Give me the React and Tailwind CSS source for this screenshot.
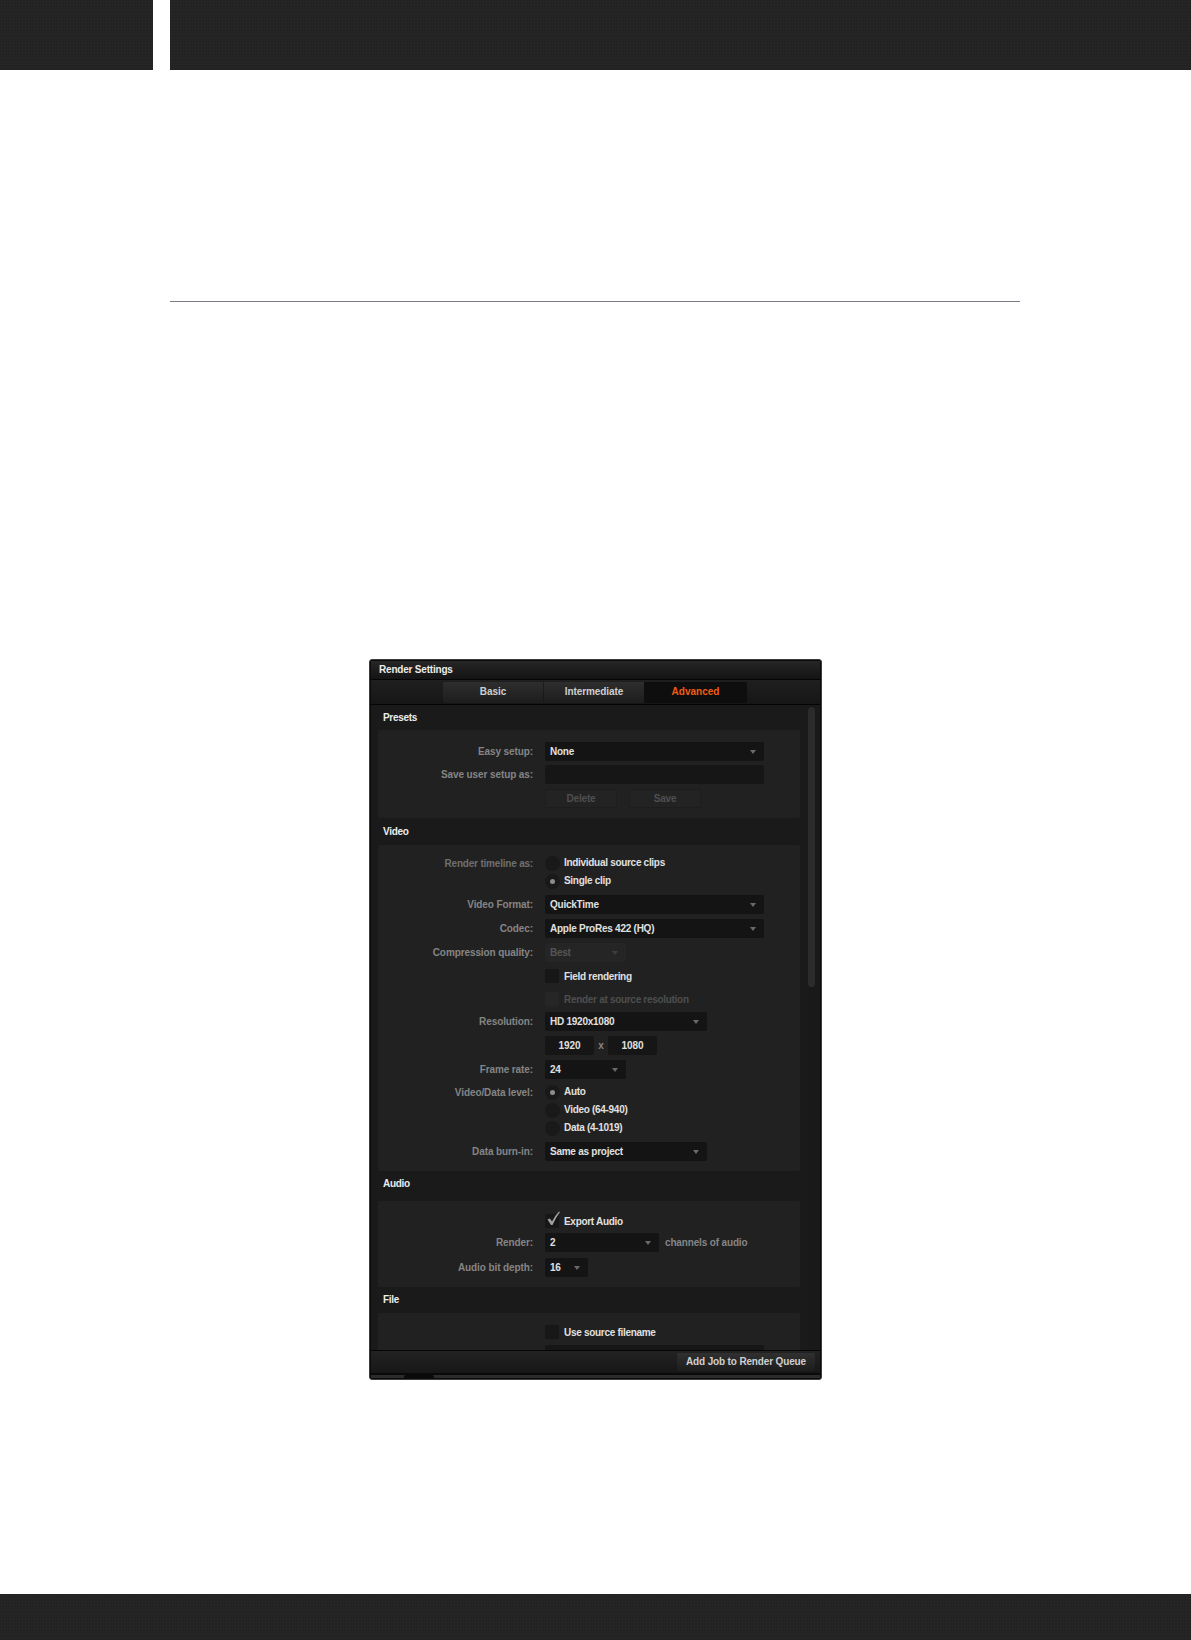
import React from "react";

const texture = "bg-[#232323] bg-[radial-gradient(rgba(255,255,255,0.03)_1px,transparent_1px)] bg-[size:3px_3px]";

function Caret({ dim }) {
  return (
    <svg width="6" height="4" viewBox="0 0 6 4" className="shrink-0">
      <path d="M0 0h6L3 4z" fill={dim ? "#3f3f3f" : "#6a6a6a"} />
    </svg>
  );
}

function Row({ label, dim, className = "", children }) {
  return (
    <div className={`flex items-center ${className}`}>
      <div className={`w-[155px] text-right tracking-[-0.1px] ${dim ? "text-[#6f6f6f]" : "text-[#858585]"}`}>{label}</div>
      <div className="ml-[12px] flex items-center">{children}</div>
    </div>
  );
}

function Select({ value, width, disabled }) {
  return (
    <div className={`flex h-[19px] items-center justify-between rounded-[2px] pl-[5px] pr-[8px] tracking-[-0.25px] ${width} ${disabled ? "bg-[#252525] text-[#555555]" : "bg-[#141414] text-[#e0e0e0]"}`}>
      <span>{value}</span>
      <Caret dim={disabled} />
    </div>
  );
}

function Radio({ label, on, className = "" }) {
  return (
    <div className={`flex h-[18px] items-center ${className}`}>
      <div className="flex h-[15px] w-[15px] items-center justify-center rounded-full bg-[#191919]">
        {on && <div className="h-[5px] w-[5px] rounded-full bg-[#8c8c8c]" />}
      </div>
      <span className="ml-[4px] tracking-[-0.3px] text-[#e0e0e0]">{label}</span>
    </div>
  );
}

function Check({ label, checked, disabled }) {
  return (
    <div className="flex h-[14px] items-center">
      <div className={`relative h-[14px] w-[14px] rounded-[2px] ${disabled ? "bg-[#262626]" : "bg-[#171717]"}`}>
        {checked && (
          <svg width="14" height="15" viewBox="0 0 14 15" className="absolute -top-[3px] left-[2px]">
            <path d="M0.5 8.5L3 7.5L5 10.5Q7.5 5 12 0.5L13 1Q8.5 7 5.5 14H4z" fill="#a0a0a0" />
          </svg>
        )}
      </div>
      <span className={`relative top-px ml-[5px] tracking-[-0.3px] ${disabled ? "text-[#4e4e4e]" : "text-[#e0e0e0]"}`}>{label}</span>
    </div>
  );
}

function DimButton({ label }) {
  return (
    <div className="flex h-[19px] w-[72px] items-center justify-center rounded-[2px] border border-[#1d1d1d] bg-[#232323] tracking-[-0.2px] text-[#4f4f4f]">
      {label}
    </div>
  );
}

function Section({ title, headClass, cardClass, children }) {
  return (
    <>
      <div className={`pl-[5px] font-bold tracking-[-0.3px] text-[#ececec] ${headClass}`}>{title}</div>
      <div className={`rounded-[2px] bg-[#212121] ${cardClass}`}>{children}</div>
    </>
  );
}

function RenderSettings() {
  return (
    <div className="ml-[369px] mt-[357px] flex h-[721px] w-[453px] flex-col rounded-[3px] border border-[#3d3d3d] bg-[#0a0a0a] px-px pb-px pt-px font-['Liberation_Sans',sans-serif] text-[10px] font-bold leading-none">
      <div className="flex h-[18px] shrink-0 items-center bg-gradient-to-b from-[#262626] to-[#141414] pl-[8px] tracking-[-0.2px] text-[#ececec]">
        Render Settings
      </div>
      <div className="flex h-[26px] shrink-0 items-center border-y border-[#050505] bg-gradient-to-b from-[#1f1f1f] to-[#161616] pl-[72px]">
        <div className="flex h-[21px] w-[304px] overflow-hidden rounded-[2px] text-[#cfcfcf]">
          <div className="flex w-[100px] items-center justify-center bg-gradient-to-b from-[#2e2e2e] to-[#1d1d1d]">Basic</div>
          <div className="ml-px flex w-[100px] items-center justify-center bg-gradient-to-b from-[#2e2e2e] to-[#1d1d1d] tracking-[-0.1px]">Intermediate</div>
          <div className="flex flex-1 items-center justify-center bg-[#0e0e0e] text-[#f25c14]">Advanced</div>
        </div>
      </div>

      <div className="flex min-h-0 flex-1 overflow-hidden bg-[#1a1a1a]">
        <div className="ml-[7px] w-[422px] shrink-0">
          <Section title="Presets" headClass="pt-[8px] h-[25px]" cardClass="h-[88px] pt-[12px]">
            <Row label="Easy setup:">
              <Select value="None" width="w-[219px]" />
            </Row>
            <Row label="Save user setup as:" className="mt-[4px]">
              <div className="h-[19px] w-[219px] rounded-[2px] bg-[#161616]" />
            </Row>
            <Row label="" className="mt-[5px]">
              <DimButton label="Delete" />
              <div className="ml-[12px]"><DimButton label="Save" /></div>
            </Row>
          </Section>

          <Section title="Video" headClass="pt-[9px] h-[27px]" cardClass="h-[326px] pt-[9px]">
            <div className="flex">
              <div className="w-[155px] pt-[5px] text-right tracking-[-0.2px] text-[#6f6f6f]">Render timeline as:</div>
              <div className="ml-[12px]">
                <Radio label="Individual source clips" />
                <Radio label="Single clip" on />
              </div>
            </div>
            <Row label="Video Format:" className="mt-[5px]">
              <Select value="QuickTime" width="w-[219px]" />
            </Row>
            <Row label="Codec:" className="mt-[5px]">
              <Select value="Apple ProRes 422 (HQ)" width="w-[219px]" />
            </Row>
            <Row label="Compression quality:" className="mt-[5px]">
              <Select value="Best" width="w-[81px]" disabled />
            </Row>
            <Row label="" className="mt-[7px]">
              <Check label="Field rendering" />
            </Row>
            <Row label="" className="mt-[9px]">
              <Check label="Render at source resolution" disabled />
            </Row>
            <Row label="Resolution:" className="mt-[6px]">
              <Select value="HD 1920x1080" width="w-[162px]" />
            </Row>
            <Row label="" className="mt-[5px]">
              <div className="flex h-[19px] w-[49px] items-center justify-center rounded-[2px] bg-[#161616] text-[#e0e0e0]">1920</div>
              <span className="w-[14px] text-center text-[#858585]">x</span>
              <div className="flex h-[19px] w-[49px] items-center justify-center rounded-[2px] bg-[#161616] text-[#e0e0e0]">1080</div>
            </Row>
            <Row label="Frame rate:" className="mt-[5px]">
              <Select value="24" width="w-[81px]" />
            </Row>
            <div className="mt-[4px] flex">
              <div className="w-[155px] pt-[5px] text-right tracking-[-0.1px] text-[#858585]">Video/Data level:</div>
              <div className="ml-[12px]">
                <Radio label="Auto" on />
                <Radio label="Video (64-940)" />
                <Radio label="Data (4-1019)" />
              </div>
            </div>
            <Row label="Data burn-in:" className="mt-[5px]">
              <Select value="Same as project" width="w-[162px]" />
            </Row>
          </Section>

          <Section title="Audio" headClass="pt-[8px] h-[30px]" cardClass="h-[86px] pt-[13px]">
            <Row label="">
              <Check label="Export Audio" checked />
            </Row>
            <Row label="Render:" className="mt-[5px]">
              <Select value="2" width="w-[114px]" />
              <span className="ml-[6px] tracking-[-0.15px] text-[#858585]">channels of audio</span>
            </Row>
            <Row label="Audio bit depth:" className="mt-[6px]">
              <Select value="16" width="w-[43px]" />
            </Row>
          </Section>

          <Section title="File" headClass="pt-[8px] h-[26px]" cardClass="h-[80px] pt-[12px]">
            <Row label="">
              <Check label="Use source filename" />
            </Row>
            <Row label="" className="mt-[6px]">
              <div className="h-[19px] w-[219px] rounded-[2px] bg-[#161616]" />
            </Row>
          </Section>
        </div>

        <div className="ml-[7px] w-[9px] shrink-0 bg-[#191919] px-px pt-[2px]">
          <div className="h-[280px] w-[7px] rounded-full bg-[#2b2b2b]" />
        </div>
      </div>

      <div className="flex h-[23px] shrink-0 items-center justify-end border-t border-[#050505] bg-gradient-to-b from-[#222222] to-[#171717] pr-[5px]">
        <div className="flex h-[18px] w-[138px] items-center justify-center rounded-[2px] bg-gradient-to-b from-[#303030] to-[#1d1d1d] tracking-[-0.15px] text-[#cfcfcf]">
          Add Job to Render Queue
        </div>
      </div>
      <div className="mt-[2px] flex h-[3px] shrink-0 bg-[#2b2b2b] pl-[33px]">
        <div className="h-[3px] w-[30px] rounded-t-[2px] bg-[#0a0a0a]" />
      </div>
    </div>
  );
}

export default function App() {
  return (
    <div className="h-[1640px] w-[1191px] overflow-hidden bg-white">
      <div className="flex h-[70px] gap-[17px]">
        <div className={`w-[153px] ${texture}`} />
        <div className={`flex-1 ${texture}`} />
      </div>
      <div className="ml-[170px] mt-[231px] h-px w-[850px] bg-[#7b7b86]" />
      <RenderSettings />
      <div className={`mt-[214px] h-[46px] ${texture}`} />
    </div>
  );
}
